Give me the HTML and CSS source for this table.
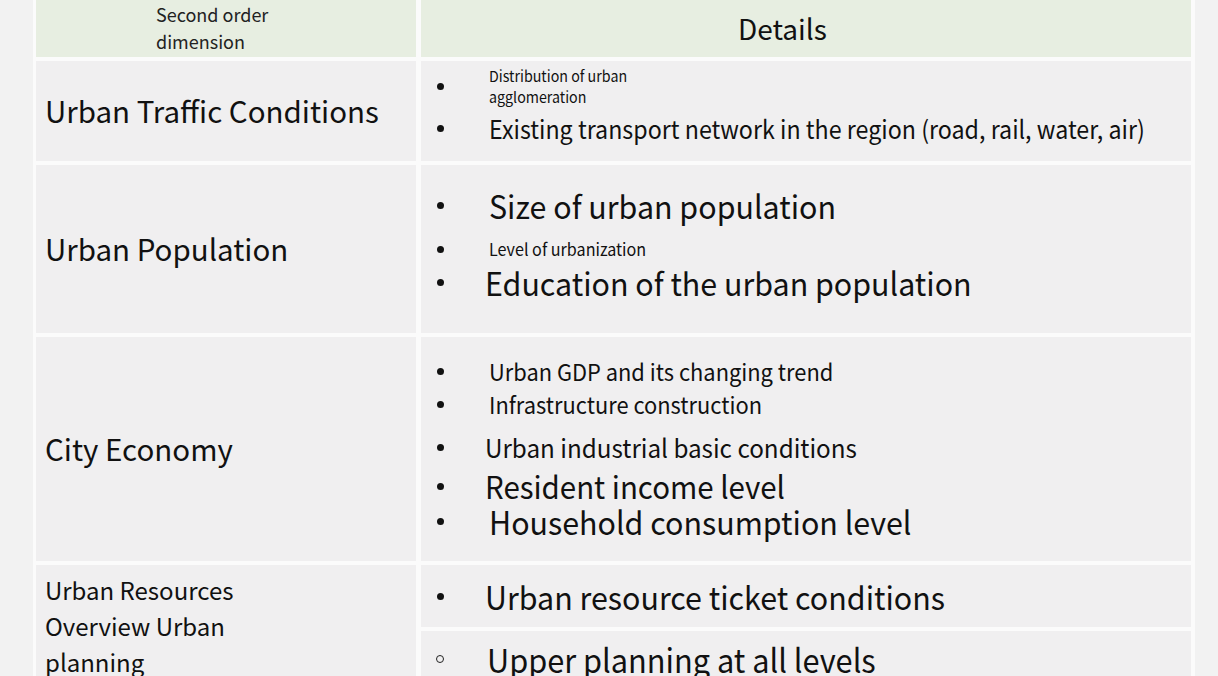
FILE: index.html
```html
<!DOCTYPE html>
<html>
<head>
<meta charset="utf-8">
<link rel="stylesheet" href="styles.css">
</head>
<body>
<div class="page">
  <div class="grid">
    <div class="cell head head-left"><div class="head-left-text">Second order<br>dimension</div></div>
    <div class="cell head head-right">Details</div>

    <div class="cell left">Urban Traffic Conditions</div>
    <div class="cell right r1">
      <div class="item i-dist"><span class="dot"></span><span class="txt">Distribution of urban<br>agglomeration</span></div>
      <div class="item i-exist"><span class="dot"></span><span class="txt">Existing transport network in the region (road, rail, water, air)</span></div>
    </div>

    <div class="cell left">Urban Population</div>
    <div class="cell right r2">
      <div class="item i-size"><span class="dot"></span><span class="txt">Size of urban population</span></div>
      <div class="item i-level"><span class="dot"></span><span class="txt">Level of urbanization</span></div>
      <div class="item i-edu"><span class="dot"></span><span class="txt shift">Education of the urban population</span></div>
    </div>

    <div class="cell left">City Economy</div>
    <div class="cell right r3">
      <div class="item i-gdp"><span class="dot"></span><span class="txt">Urban GDP and its changing trend</span></div>
      <div class="item i-infra"><span class="dot"></span><span class="txt">Infrastructure construction</span></div>
      <div class="item i-ind"><span class="dot"></span><span class="txt shift">Urban industrial basic conditions</span></div>
      <div class="item i-res"><span class="dot"></span><span class="txt shift">Resident income level</span></div>
      <div class="item i-house"><span class="dot"></span><span class="txt">Household consumption level</span></div>
    </div>

    <div class="cell left merged">Urban Resources<br>Overview Urban<br>planning</div>
    <div class="cell right r4">
      <div class="item i-big"><span class="dot"></span><span class="txt shift">Urban resource ticket conditions</span></div>
    </div>
    <div class="cell right r5">
      <div class="item i-upper"><span class="ring"></span><span class="txt shift-s">Upper planning at all levels</span></div>
    </div>
  </div>
</div>
</body>
</html>
```
FILE: styles.css
```css
html, body {
  margin: 0;
  padding: 0;
  background: #f2f2f2;
  overflow: hidden;
}
body {
  font-family: "Noto Sans CJK SC", "Noto Sans", sans-serif;
  color: #111;
}
.page {
  width: 1218px;
  height: 676px;
  overflow: hidden;
  padding-left: 33px;
  box-sizing: border-box;
}
.grid {
  width: 1162px;
  box-sizing: border-box;
  margin-top: -3px;
  padding: 3px;
  background: #fbfbfb;
  display: grid;
  grid-template-columns: 380px 770px;
  grid-template-rows: 57px 100px 168px 224px 62px 70px;
  column-gap: 5px;
  row-gap: 4px;
}
.cell {
  background: #f0eff0;
  box-sizing: border-box;
}
.head {
  background: #e7eee1;
}
.head-left {
  padding-left: 120px;
  padding-top: 1px;
}
.head-left-text {
  font-size: 18px;
  line-height: 27px;
  color: #222;
}
.head-right {
  font-size: 28px;
  line-height: 57px;
  padding-left: 317px;
  color: #111;
}
.left {
  display: flex;
  align-items: center;
  padding-left: 9px;
  padding-bottom: 3px;
  font-size: 29.5px;
  color: #111;
}
.left.merged {
  grid-row: span 2;
  padding-top: 7px;
  padding-bottom: 0;
  font-size: 24px;
  line-height: 36px;
  display: block;
}
.right {
  padding-left: 12px;
}
.item {
  display: flex;
  align-items: center;
}
.dot {
  width: 7px;
  height: 7px;
  border-radius: 50%;
  background: #111;
  margin-left: 4px;
  margin-right: 45px;
  flex: none;
}
.ring {
  width: 6px;
  height: 6px;
  border-radius: 50%;
  border: 1.5px solid #222;
  margin-left: 3px;
  margin-right: 44px;
  flex: none;
  box-sizing: content-box;
}
.txt, .shift-s {
  display: inline-block;
  white-space: nowrap;
  transform: scaleX(0.95);
  transform-origin: left center;
}
.txt.shift {
  margin-left: -4px;
}
.shift-s {
  margin-left: -1px;
  transform: scaleX(0.945);
}
.r1 { padding-top: 4px; }
.i-dist { font-size: 15px; line-height: 21px; }
.i-exist { font-size: 25px; line-height: 38px; margin-top: 2px; }
.i-exist .txt { transform: scaleX(0.93); }

.r2 { padding-top: 20px; }
.i-size { font-size: 32px; line-height: 40px; }
.i-level { font-size: 17px; line-height: 42px; padding-top: 3px; }
.i-edu { font-size: 32px; line-height: 30px; margin-top: -3px; }

.r3 { padding-top: 17px; }
.i-gdp { font-size: 23px; line-height: 34px; }
.i-infra { font-size: 23px; line-height: 32px; }
.i-ind { font-size: 25.5px; line-height: 42px; margin-top: 6px; }
.i-res { font-size: 31px; line-height: 36px; }
.i-house { font-size: 32px; line-height: 34px; }

.r4 { display: flex; align-items: center; }
.r5 { padding-top: 8px; }
.i-big { font-size: 32px; line-height: 40px; }
.i-upper { font-size: 32.5px; line-height: 40px; }
```
